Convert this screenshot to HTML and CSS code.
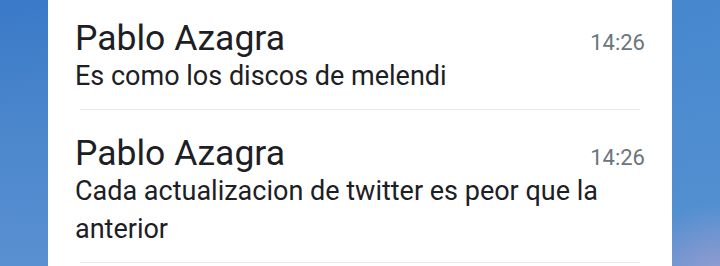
FILE: index.html
```html
<!DOCTYPE html>
<html lang="es">
<head>
    <meta charset="UTF-8">
    <meta name="viewport" content="width=device-width, initial-scale=1.0">
    <title>Mensajes</title>
    <link rel="stylesheet" href="styles.css">
</head>
<body>
    <div class="panel">
        <ul class="messages">
            <li class="message">
                <div class="message-head">
                    <span class="sender">Pablo Azagra</span>
                    <span class="time">14:26</span>
                </div>
                <p class="text">Es como los discos de melendi</p>
            </li>
            <li class="message">
                <div class="message-head">
                    <span class="sender">Pablo Azagra</span>
                    <span class="time">14:26</span>
                </div>
                <p class="text">Cada actualizacion de twitter es peor que la anterior</p>
            </li>
        </ul>
    </div>
</body>
</html>
```

FILE: styles.css
```css
:root {
    --text: #1c2024;
    --text-secondary: #6b757d;
    --divider: #e6e9eb;
}

html, body {
    height: 100%;
}

body {
    margin: 0;
    font-family: Roboto, 'Noto Sans', sans-serif;
    background:
        radial-gradient(circle at 100% 110%, rgba(170, 160, 205, 0.95) 0, rgba(170, 160, 205, 0) 90px),
        linear-gradient(to right, rgba(60, 122, 200, 0) 0, rgba(80, 145, 210, 0.6) 100%),
        linear-gradient(to bottom, #3a79c8 0%, #4c87cc 50%, #5990d2 100%);
    overflow: hidden;
}

.panel {
    display: flow-root;
    margin: 0 48px;
    height: 100%;
    background-color: #ffffff;
    overflow: hidden;
}

.messages {
    list-style: none;
    margin: -5px 0 0;
    padding: 0;
}

.message {
    position: relative;
    padding: 24px 27px 15px;
}

.message::after {
    content: "";
    position: absolute;
    left: 32px;
    right: 32px;
    bottom: 0;
    height: 1px;
    background-color: var(--divider);
}

.message-head {
    display: flex;
    justify-content: space-between;
    align-items: baseline;
}

.sender {
    font-size: 35.5px;
    line-height: 38px;
    color: var(--text);
}

.time {
    font-size: 22px;
    color: var(--text-secondary);
}

.text {
    margin: 0;
    font-size: 27px;
    line-height: 38px;
    color: var(--text);
}
```
